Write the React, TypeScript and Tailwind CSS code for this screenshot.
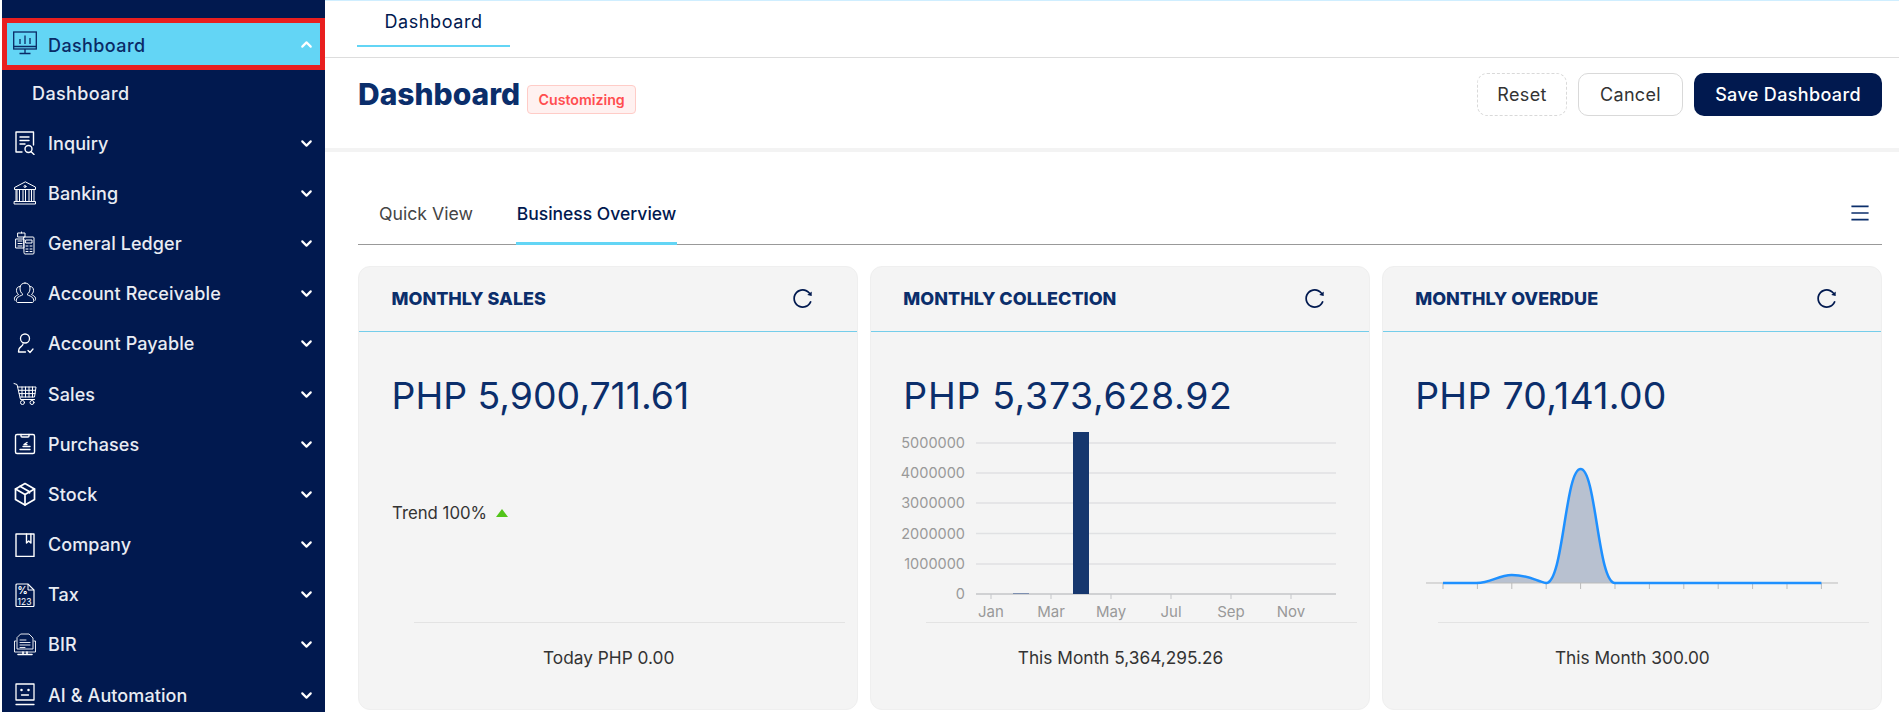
import React from "react";
import { ChevronDown, ChevronUp } from "lucide-react";
import { AiOutlineReload, AiOutlineMenu } from "react-icons/ai";

const S = ({ children, w = 24, h = 24, sw = 1.2 }: { children: React.ReactNode; w?: number; h?: number; sw?: number }) => (
  <svg width={w} height={h} viewBox="0 0 24 24" fill="none" stroke="currentColor" strokeWidth={sw} strokeLinecap="round" strokeLinejoin="round" className="shrink-0">
    {children}
  </svg>
);

const icons: Record<string, React.ReactNode> = {
  Inquiry: (<S sw={1.4}><path d="M9 21H3V1h17.500v13" /><path d="M7 6h9M7 9.500h9M7 13h5" /><circle cx="15.500" cy="18" r="3.500" /><path d="M18.200 20.700L21 23.500" /></S>),
  Banking: (<S sw={1}><path d="M12 1L1.500 6.500v2h21v-2z" /><path d="M4 9v11M6.500 9v11M10 9v11M12.500 9v11M16 9v11M18.500 9v11M21 9v11M3 9v11" /><path d="M1.500 20.500h21v2.500h-21z" /><circle cx="12" cy="5.500" r="1" /></S>),
  "General Ledger": (<S sw={1}><path d="M5 2h7v4H5zM8.500 1v1" /><path d="M3 8h8v9H3zM5 10h4M5 12.500h4M5 15h4" /><path d="M11 6h9a1 1 0 0 1 1 1v15a1 1 0 0 1-1 1h-8a1 1 0 0 1-1-1z" /><path d="M13 9h6v3h-6zM13 15h2M17 15h2M13 18h2M17 18h2M13 20.500h2M17 20.500h2" /></S>),
  "Account Receivable": (<S sw={1}><path d="M12 1c-3 0-5 2-5 5 0 3 1 5 3 6.500-1 1-6 2-6.500 4.500-.3 2 0 3.500 1 3.500h15c1 0 1.300-1.500 1-3.500-.5-2.500-5.500-3.500-6.500-4.500 2-1.500 3-3.500 3-6.500 0-3-2-5-5-5z" /><path d="M7 4.500C4.500 4.500 3.500 6 3.500 8.500c0 2 1 3 2 4-1 .8-3.500 1.500-4 3.500-.2 1 0 2 .5 2.500" /><path d="M17 4.500c2.500 0 3.500 1.500 3.500 4 0 2-1 3-2 4 1 .8 3.500 1.500 4 3.500.2 1 0 2-.5 2.500" /></S>),
  "Account Payable": (<S sw={1.3}><circle cx="12" cy="6.500" r="4.500" /><path d="M10 12c0 2-3.500 3-4 5-.3 1.500-.5 2.500-.5 3h7" /><path d="M15 18.500l2 2 3-3.500" /></S>),
  Sales: (<S sw={1}><path d="M1 1.500l3 1 3.500 15h14" /><path d="M4.800 5H23l-1.500 10H7" /><path d="M5.500 8.300H22.500M6.200 11.600H22M9 5v10M12.500 5v10M16 5v10M19.500 5v10" /><circle cx="9.500" cy="20.500" r="2" /><circle cx="19" cy="20.500" r="2" /></S>),
  Purchases: (<S sw={1.4}><rect x="2.500" y="2.500" width="19" height="19" rx="1.500" /><path d="M8 2.500v1.500a1 1 0 0 0 1 1h6a1 1 0 0 0 1-1V2.500" /><path d="M7 17.500h10M10 14.500h7M14 10.500l-3 2 3 .1" /></S>),
  Stock: (<S sw={1.7}><path d="M12 1.500l9.500 5.500v10.500L12 23l-9.500-5.500V7z" /><path d="M2.500 7L12 12.500 21.500 7M12 12.500V23" /><path d="M7 4.300l9.500 5.500v1" /></S>),
  Company: (<S sw={1.4}><rect x="3" y="1" width="18" height="22.500" /><path d="M13.500 1v9l2.200-2 2.200 2V1" /></S>),
  Tax: (<svg width="24" height="24" viewBox="0 0 24 24" className="shrink-0"><path d="M4 1h11l6 6v15.500a1 1 0 0 1-1 1H4a1 1 0 0 1-1-1V2a1 1 0 0 1 1-1z" fill="none" stroke="currentColor" strokeWidth="1.200" /><path d="M15 1v6h6" fill="none" stroke="currentColor" strokeWidth="1" /><text x="4.500" y="11" fontSize="10" fontWeight="700" fill="currentColor">%</text><text x="4.500" y="21.500" fontSize="8.500" fill="currentColor">123</text></svg>),
  BIR: (<S sw={0.9}><path d="M3 8H1.500v11h21V8H21" /><path d="M5 21.500h14M10 19v2.500M14 19v2.500" strokeWidth="1.600" /><path d="M8 1h8l4 4v11H4V5z" /><path d="M7 7h6M7 9.500h10M7 12h10M7 14.500h5" /></S>),
  "AI & Automation": (<S sw={1.3}><rect x="3" y="1" width="18" height="16" /><circle cx="8.500" cy="7" r=".6" fill="currentColor" /><circle cx="15.500" cy="7" r=".6" fill="currentColor" /><path d="M8.500 12h7M3 21.500h18" /></S>),
};

const items = ["Inquiry", "Banking", "General Ledger", "Account Receivable", "Account Payable", "Sales", "Purchases", "Stock", "Company", "Tax", "BIR", "AI & Automation"];

function Sidebar() {
  return (
    <aside className="ml-[2px] w-[323px] h-[712px] shrink-0 overflow-hidden bg-[#01194f] pt-[18px] text-[#e9ecf3]">
      <div className="flex h-[52px] items-center border-[5px] border-[#e81f1f] bg-[#63d5f5] pl-[6px] pr-[5px] text-[#0a2a66]">
        <svg width="24" height="24" viewBox="0 0 24 24" fill="none" stroke="currentColor" strokeWidth="1.300" className="shrink-0 mb-[3px]">
          <rect x="0.700" y="1" width="22.600" height="17" />
          <path d="M7 13V8M12 13V4.500M17 13V7M0.700 15.500h22.600M12 18v4M6.500 22.500h11" />
        </svg>
        <span className="ml-[11px] flex-1 pt-[2px] font-medium text-[18px] tracking-[.4px]">Dashboard</span>
        <ChevronUp size={17} strokeWidth={3} className="text-white" />
      </div>
      <div className="flex h-[44px] items-center pl-[30px] pt-[2px] text-[18px] font-medium tracking-[.4px] mb-[4px]">Dashboard</div>
      {items.map((t) => (
        <div key={t} className="flex h-[50.2px] items-center pl-[11px] pr-[10px]">
          <span className="flex w-[24px] justify-center text-white">{icons[t]}</span>
          <span className="ml-[11px] flex-1 text-[18px] font-medium tracking-[.1px]">{t}</span>
          <ChevronDown size={17} strokeWidth={3} className="text-white" />
        </div>
      ))}
    </aside>
  );
}

function BarChart() {
  const grid = [594, 564, 533.5, 503, 473, 443];
  const ox = 870;
  const oy = 432;
  const labels = ["0", "1000000", "2000000", "3000000", "4000000", "5000000"];
  const months = [["Jan", 990], ["Mar", 1050], ["May", 1110], ["Jul", 1170], ["Sep", 1230], ["Nov", 1290]] as const;
  return (
    <svg width="500" height="190" viewBox="0 0 500 190" className="block">
      {grid.map((y, i) => (
        <g key={y}>
          <line x1={975 - ox} x2={1335 - ox} y1={y - oy} y2={y - oy} stroke={i === 0 ? "#c4c6c9" : "#e0e1e3"} strokeWidth="1.500" />
          <text x={964 - ox} y={y - oy + 5} textAnchor="end" fontSize="14.500" fill="#999">{labels[i]}</text>
        </g>
      ))}
      <rect x={1012 - ox} y={593 - oy} width="16" height="1" fill="#7d8fb0" />
      <rect x={1072 - ox} y={0} width="16" height={594 - oy} fill="#16376e" />
      {months.map(([m, x]) => (
        <g key={m}>
          <line x1={x - ox} x2={x - ox} y1={594 - oy} y2={599 - oy} stroke="#c4c6c9" />
          <text x={x - ox} y={617 - oy} textAnchor="middle" fontSize="15" fill="#999">{m}</text>
        </g>
      ))}
    </svg>
  );
}

function AreaChart() {
  const ox = 1382;
  const oy = 432;
  const x0 = 1442 - ox;
  const b = 583 - oy;
  const step = 34.4;
  const line = `M${x0} ${b} L${x0 + step - 1} ${b} C${x0 + step + 14} ${b} ${x0 + 1.600 * step} ${b - 8} ${x0 + 2 * step} ${b - 8} C${x0 + 2.500 * step} ${b - 8} ${x0 + 2.700 * step} ${b - 2} ${x0 + 3 * step} ${b} C${x0 + 3.500 * step} ${b} ${x0 + 3.550 * step} ${b - 114} ${x0 + 4 * step} ${b - 114} C${x0 + 4.450 * step} ${b - 114} ${x0 + 4.500 * step} ${b} ${x0 + 5 * step} ${b} L${x0 + 11 * step} ${b}`;
  return (
    <svg width="500" height="190" viewBox="0 0 500 190" className="block">
      <path d={line + " Z"} fill="#16376e" fillOpacity="0.27" stroke="none" />
      <line x1={1425 - ox} x2={1837 - ox} y1={b} y2={b} stroke="#bbb" strokeWidth="1" />
      {Array.from({ length: 12 }, (_, i) => (
        <line key={i} x1={x0 + i * step} x2={x0 + i * step} y1={b} y2={b + 6} stroke="#bbb" />
      ))}
      <path d={line} fill="none" stroke="#1e90ff" strokeWidth="2.500" />
    </svg>
  );
}

function Card({ title, value, footer, valueClass = "", children }: { title: string; value: string; footer: string; valueClass?: string; children?: React.ReactNode }) {
  return (
    <div className="h-[444px] rounded-[12px] border border-[#efefef] bg-[#f4f4f4]">
      <div className="flex h-[65px] items-center justify-between border-b border-[#74cdea] pb-[2px] pl-[32.500px] pr-[43px]">
        <h3 className="text-[18px] font-extrabold text-[#0b2e6b]">{title}</h3>
        <AiOutlineReload size={23} className="text-[#01194f]" />
      </div>
      <div className={`h-[100px] pl-[32.500px] pt-[42px] text-[37.400px] leading-[44px] text-[#0b2e6b] ${valueClass}`}>{value}</div>
      <div className="h-[190px]">{children}</div>
      <div className="ml-[55px] mr-[12px] border-t border-[#e3e3e3] pt-[23px] text-center text-[17.300px] leading-[24px] text-[#333]">
        <span className="relative -left-[21px]">{footer}</span>
      </div>
    </div>
  );
}

export default function App() {
  return (
    <div className="flex h-[712px] w-[1899px] overflow-hidden bg-white font-['Inter','Noto_Sans',sans-serif]">
      <Sidebar />
      <main className="flex-1 min-w-0">
        <div className="h-[58px] border-t border-[#cfeeff] border-b-[#dddddd] border-b">
          <div className="ml-[32px] flex h-[46px] w-[153px] items-end justify-center border-b-2 border-[#63d5f5] pb-[13px] text-[18px] leading-[20px] tracking-[.6px] text-[#01194f]">Dashboard</div>
        </div>
        <div className="flex h-[90px] items-start justify-between border-b-4 border-[#f3f3f3] pl-[33px] pr-[17px] box-content">
          <div className="flex items-start pt-[16px]">
            <h1 className="text-[30px] font-extrabold leading-[40px] text-[#0b2e6b]">Dashboard</h1>
            <span className="ml-[7px] mt-[11px] flex h-[29px] w-[109px] items-center justify-center rounded-[4px] border border-[#ffccc7] bg-[#fff1f0] text-[14.200px] font-semibold text-[#ff4d4f]">Customizing</span>
          </div>
          <div className="flex gap-[11px] pt-[15px] text-[18px] tracking-[.35px]">
            <button className="h-[43px] w-[90px] rounded-[10px] border border-dashed border-[#d9d9d9] text-[#333]">Reset</button>
            <button className="h-[43px] w-[105px] rounded-[10px] border border-[#d9d9d9] text-[#333]">Cancel</button>
            <button className="h-[43px] w-[188px] rounded-[10px] bg-[#01194f] font-medium text-white">Save Dashboard</button>
          </div>
        </div>
        <div className="pr-[17px] pl-[33px]">
          <div className="flex h-[93px] items-end border-b border-[#999] relative">
            <div className="mb-[-1px] flex h-[60px] w-[158px] items-center pb-[1px] pl-[21px] text-[17.700px] text-[#444]">Quick View</div>
            <div className="mb-[-1px] flex h-[60px] w-[161px] items-center justify-center border-b-[3px] pt-[2px] border-[#63d5f5] text-[17.500px] font-medium text-[#01194f]">Business Overview</div>
            <AiOutlineMenu size={22} className="absolute right-[11px] top-[50px] text-[#0b2e6b]" />
          </div>
          <div className="mt-[21px] grid grid-cols-3 gap-[11.500px]">
            <Card title="MONTHLY SALES" value="PHP 5,900,711.61" footer="Today PHP 0.00">
              <div className="flex items-center pl-[33px] pt-[69px] text-[16.800px] leading-[24px] text-[#333]">
                Trend 100%
                <svg width="12" height="8" viewBox="0 0 12 8" className="ml-[9px]"><path d="M6 0l6 8H0z" fill="#52c41a" /></svg>
              </div>
            </Card>
            <Card title="MONTHLY COLLECTION" value="PHP 5,373,628.92" valueClass="tracking-[.7px]" footer="This Month 5,364,295.26"><BarChart /></Card>
            <Card title="MONTHLY OVERDUE" value="PHP 70,141.00" valueClass="tracking-[.3px]" footer="This Month 300.00"><AreaChart /></Card>
          </div>
        </div>
      </main>
    </div>
  );
}
